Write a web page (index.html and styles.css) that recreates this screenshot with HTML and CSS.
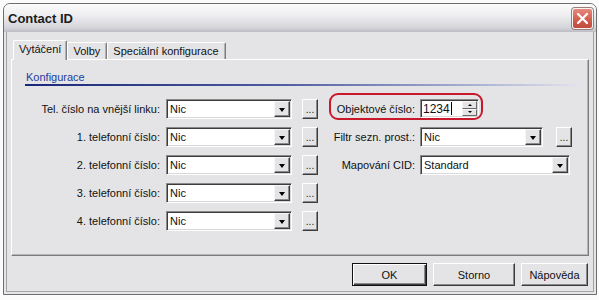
FILE: index.html
```html
<!DOCTYPE html>
<html lang="cs">
<head>
  <meta charset="UTF-8" />
  <title>Contact ID</title>
  <link rel="stylesheet" href="styles.css">
</head>
<body>
  <div class="window">
    <div class="titlebar">
      <span class="title">Contact ID</span>
      <button class="close" aria-label="Zavřít">
        <svg width="13" height="13" viewBox="0 0 13 13"><path d="M2 2 L11 11 M11 2 L2 11" stroke="#fff" stroke-width="2.2" stroke-linecap="round"/></svg>
      </button>
    </div>

    <div class="client">
      <div class="tabs">
        <div class="tab active">Vytáčení</div>
        <div class="tab">Volby</div>
        <div class="tab">Speciální konfigurace</div>
      </div>

      <div class="panel">
        <div class="section">Konfigurace</div>
        <div class="section-line"></div>

        <div class="form-grid">
          <label class="lbl left">Tel. číslo na vnější linku:</label>
          <div class="combo"><span>Nic</span><i class="drop"></i></div>
          <button class="dots">...</button>
          <label class="lbl right marked">Objektové číslo:</label>
          <div class="spin"><span>1234</span><i class="caret"></i><span class="spin-btns"><i class="up"></i><i class="down"></i></span></div>

          <label class="lbl left">1. telefonní číslo:</label>
          <div class="combo"><span>Nic</span><i class="drop"></i></div>
          <button class="dots">...</button>
          <label class="lbl right">Filtr sezn. prost.:</label>
          <div class="ctrl-row">
            <div class="combo short"><span>Nic</span><i class="drop"></i></div>
            <button class="dots">...</button>
          </div>

          <label class="lbl left">2. telefonní číslo:</label>
          <div class="combo"><span>Nic</span><i class="drop"></i></div>
          <button class="dots">...</button>
          <label class="lbl right">Mapování CID:</label>
          <div class="combo wide"><span>Standard</span><i class="drop"></i></div>

          <label class="lbl left">3. telefonní číslo:</label>
          <div class="combo"><span>Nic</span><i class="drop"></i></div>
          <button class="dots">...</button>

          <label class="lbl left">4. telefonní číslo:</label>
          <div class="combo"><span>Nic</span><i class="drop"></i></div>
          <button class="dots">...</button>
        </div>
      </div>

      <div class="actions">
        <button class="btn default ok">OK</button>
        <button class="btn storno">Storno</button>
        <button class="btn help">Nápověda</button>
      </div>
    </div>
  </div>
</body>
</html>
```

FILE: styles.css
```css
body {
  margin: 0;
  background-color: #fbfbfb;
  font-family: "Liberation Sans", Arial, sans-serif;
  font-size: 11px;
  color: #111;
}
.window {
  box-sizing: border-box;
  margin: 3px 0 0 3px;
  width: 594px;
  height: 292px;
  border: 1px solid #6e6e6e;
  border-radius: 7px 7px 0 0;
  background-color: #e4e4e6;
  display: flex;
  flex-direction: column;
}
.titlebar {
  height: 28px;
  display: flex;
  align-items: center;
  padding: 0 3px 0 4px;
  border-radius: 6px 6px 0 0;
  background: linear-gradient(#fbfbfb, #eeeef0 40%, #d4d4da 85%, #bcbcc4);
}
.title {
  font-weight: bold;
  font-size: 13px;
  color: #1c1c1c;
  flex: 1;
}
.close {
  width: 21px;
  height: 21px;
  padding: 0;
  border: 1px solid #f4f4f4;
  border-radius: 3px;
  box-shadow: 0 0 0 1px #9c7c78;
  background: linear-gradient(#e6897c, #cf5c4c 60%, #c04a3c);
  display: flex;
  align-items: center;
  justify-content: center;
}
.client {
  flex: 1;
  margin: 0 2px 2px;
  border: 1px solid #a4a4a8;
  border-top: none;
  padding: 8px 4px 0;
  display: flex;
  flex-direction: column;
}

/* tabs */
.tabs {
  display: flex;
  align-items: flex-end;
  height: 19px;
  padding-left: 2px;
  position: relative;
  z-index: 1;
}
.tab {
  box-sizing: border-box;
  height: 17px;
  padding: 2px 6px 0 5px;
  border: 1px solid #fff;
  border-right-color: #7c7c7c;
  border-bottom: none;
  border-radius: 2px 2px 0 0;
  box-shadow: inset -1px 0 0 #b0b0b0;
}
.tab.active {
  height: 20px;
  margin-bottom: -1px;
  padding: 2px 5px 0 5px;
  background-color: #e4e4e6;
}

/* panel */
.panel {
  box-sizing: border-box;
  height: 197px;
  border: 1px solid #fff;
  border-right-color: #7c7c7c;
  border-bottom-color: #7c7c7c;
  box-shadow: inset -1px -1px 0 #b4b4b8;
  padding: 10px 3px 0 13px;
}
.section {
  line-height: 14px;
  color: #1f3c9e;
  padding-left: 1px;
}
.section-line {
  height: 2px;
  background: linear-gradient(to right, #18277a, #4d5ba0 45%, #a9b0d2 80%, #e6e6ee);
}
.form-grid {
  margin-top: 13px;
  display: grid;
  grid-template-columns: 141px 126px 26px 102px 152px;
  grid-auto-rows: 20px;
  row-gap: 8px;
}
.lbl {
  display: flex;
  align-items: center;
  justify-content: flex-end;
  white-space: nowrap;
}
.lbl.left {
  grid-column: 1;
  padding-right: 6px;
}
.lbl.right {
  grid-column: 4;
  padding-right: 5px;
}
.marked {
  position: relative;
}
.marked::before {
  content: "";
  position: absolute;
  left: 11px;
  top: -6px;
  width: 150px;
  height: 23px;
  border: 2px solid #c8182a;
  border-radius: 9px;
}

/* combo boxes and buttons */
.combo {
  box-sizing: border-box;
  height: 20px;
  display: flex;
  align-items: center;
  padding: 1px 1px 1px 3px;
  background-color: #fff;
  border: 1px solid #8a8a8a;
  border-right-color: #fff;
  border-bottom-color: #fff;
  box-shadow: inset 1px 1px 0 #3c3c3c, inset -1px -1px 0 #d8d8da;
}
.combo span {
  flex: 1;
  line-height: 16px;
}
.combo.short {
  width: 123px;
}
.combo.wide {
  width: 150px;
}
.drop {
  box-sizing: border-box;
  width: 16px;
  height: 16px;
  background-color: #e4e4e6;
  border: 1px solid #f6f6f6;
  border-right-color: #3c3c3c;
  border-bottom-color: #3c3c3c;
  box-shadow: inset -1px -1px 0 #8a8a8a;
  display: flex;
  align-items: center;
  justify-content: center;
}
.drop::after {
  content: "";
  border-left: 3.5px solid transparent;
  border-right: 3.5px solid transparent;
  border-top: 4px solid #000;
  margin: 1px 1px 0 0;
}
.dots {
  justify-self: end;
  box-sizing: border-box;
  width: 16px;
  height: 20px;
  padding: 0 0 3px;
  font-family: inherit;
  font-size: 10px;
  line-height: 1;
  color: #222;
  background-color: #e4e4e6;
  border: 1px solid #fff;
  border-right-color: #3c3c3c;
  border-bottom-color: #3c3c3c;
  box-shadow: inset -1px -1px 0 #8a8a8a;
  display: flex;
  align-items: flex-end;
  justify-content: center;
}
.ctrl-row {
  display: flex;
  justify-content: space-between;
}
.spin {
  box-sizing: border-box;
  width: 59px;
  height: 19px;
  margin-top: 0;
  display: flex;
  align-items: center;
  padding: 1px 1px 1px 2px;
  background-color: #fff;
  border: 1px solid #8a8a8a;
  border-right-color: #fff;
  border-bottom-color: #fff;
  box-shadow: inset 1px 1px 0 #3c3c3c, inset -1px -1px 0 #d8d8da;
  font-size: 12px;
}
.caret {
  width: 1px;
  height: 13px;
  background-color: #000;
  margin-left: 1px;
}
.spin-btns {
  margin-left: auto;
  display: flex;
  flex-direction: column;
  width: 15px;
  height: 15px;
}
.spin-btns i {
  flex: 1;
  box-sizing: border-box;
  background-color: #e4e4e6;
  border: 1px solid #f6f6f6;
  border-right-color: #6a6a6a;
  border-bottom-color: #6a6a6a;
  display: flex;
  align-items: center;
  justify-content: center;
}
.spin-btns .up::after {
  content: "";
  border-left: 2px solid transparent;
  border-right: 2px solid transparent;
  border-bottom: 2px solid #000;
}
.spin-btns .down::after {
  content: "";
  border-left: 2px solid transparent;
  border-right: 2px solid transparent;
  border-top: 2px solid #000;
}

/* dialog buttons */
.actions {
  display: flex;
  justify-content: flex-end;
  gap: 6px;
  margin-top: 7px;
  padding-right: 1px;
}
.btn {
  box-sizing: border-box;
  height: 23px;
  font-family: inherit;
  font-size: 11px;
  color: #111;
  background-color: #e4e4e6;
  border: 1px solid #fff;
  border-right-color: #3c3c3c;
  border-bottom-color: #3c3c3c;
  box-shadow: inset -1px -1px 0 #8a8a8a;
  padding: 0;
}
.btn.default {
  border: 1px solid #111;
  box-shadow: inset 1px 1px 0 #fff, inset -1px -1px 0 #3c3c3c, inset -2px -2px 0 #8a8a8a;
}
.ok {
  width: 75px;
}
.storno {
  width: 82px;
}
.help {
  width: 67px;
}
```
